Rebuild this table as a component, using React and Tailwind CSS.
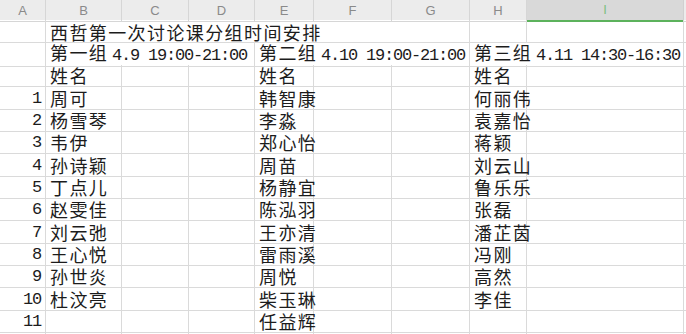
const CJK = 'font-["Noto_Sans_CJK_SC","Noto_Sans",sans-serif]'
const MONO = 'font-["Liberation_Mono","DejaVu_Sans_Mono",monospace]'

const GRID = 'grid grid-cols-[46px_76px_67px_66px_59px_78px_78px_57px_157px_1fr]'

const groupB = ['周可', '杨雪琴', '韦伊', '孙诗颖', '丁点儿', '赵雯佳', '刘云弛', '王心悦', '孙世炎', '杜汶亮', '']
const groupE = ['韩智康', '李淼', '郑心怡', '周苗', '杨静宜', '陈泓羽', '王亦清', '雷雨溪', '周悦', '柴玉琳', '任益辉']
const groupH = ['何丽伟', '袁嘉怡', '蒋颖', '刘云山', '鲁乐乐', '张磊', '潘芷茵', '冯刚', '高然', '李佳', '']

function Cell({ className = '', children }) {
  return (
    <div className={`h-full border-r border-b border-[#dadada] flex items-center px-1 whitespace-nowrap overflow-visible ${className}`}>
      {children}
    </div>
  )
}

function Text({ children, className = '' }) {
  return <span className={`${CJK} text-[18px] tracking-[1.4px] leading-[20px] text-[#1c1c1c] ${className}`}>{children}</span>
}

function Digits({ children }) {
  return (
    <span className={`${MONO} text-[17px] tracking-[-1.2px] leading-[20px] whitespace-pre text-[#1c1c1c]`}>{children}</span>
  )
}

// group heading: name + date/time, the time part is half-width
function Group({ name, rest }) {
  return (
    <span className="flex items-baseline">
      <Text className="w-[62px] shrink-0">{name}</Text>
      <Digits>{rest}</Digits>
    </span>
  )
}

function Header() {
  const cols = ['A', 'B', 'C', 'D', 'E', 'F', 'G', 'H']
  return (
    <div className={`${GRID} h-[20px] bg-[#ececec] text-[13px] text-[#8a8a8a] font-["Liberation_Sans",sans-serif]`}>
      {cols.map(c => (
        <div key={c} className="border-r border-b border-[#d6d6d6] flex items-center justify-center">
          {c}
        </div>
      ))}
      <div className="bg-[#d9d9d9] border-r border-[#d0d0d0] border-b-2 border-b-[#5cb25c] flex items-center justify-center text-[#7fbf7f]">
        I
      </div>
      <div className="border-b border-[#d6d6d6]" />
    </div>
  )
}

export default function App() {
  return (
    <div className="w-[686px] h-[334px] bg-white overflow-hidden">
      <Header />

      {/* title row, merged B:G */}
      <div className={`${GRID} h-[22.3px]`}>
        <Cell />
        <Cell className="col-span-6 pt-[2px]"><Text>西哲第一次讨论课分组时间安排</Text></Cell>
        <Cell />
        <Cell />
        <Cell />
      </div>

      {/* group headings, text runs over the empty cells */}
      <div className={`${GRID} h-[22.3px]`}>
        <Cell />
        <Cell className="col-span-3">
          <Group name="第一组" rest="4.9 19:00-21:00" />
        </Cell>
        <Cell className="col-span-3">
          <Group name="第二组" rest="4.10 19:00-21:00" />
        </Cell>
        <Cell className="col-span-2">
          <Group name="第三组" rest="4.11 14:30-16:30" />
        </Cell>
        <Cell />
      </div>

      <div className={`${GRID} h-[22.3px]`}>
        <Cell />
        <Cell><Text>姓名</Text></Cell>
        <Cell />
        <Cell />
        <Cell><Text>姓名</Text></Cell>
        <Cell />
        <Cell />
        <Cell><Text>姓名</Text></Cell>
        <Cell />
        <Cell />
      </div>

      {groupE.map((e, i) => (
        <div key={i} className={`${GRID} h-[22.3px]`}>
          <Cell className="justify-end pr-[4px] pt-[2px]">
            <Digits>{i + 1}</Digits>
          </Cell>
          <Cell><Text>{groupB[i]}</Text></Cell>
          <Cell />
          <Cell />
          <Cell><Text>{e}</Text></Cell>
          <Cell />
          <Cell />
          <Cell><Text>{groupH[i]}</Text></Cell>
          <Cell />
          <Cell />
        </div>
      ))}

      <div className={`${GRID} h-[22.3px]`}>
        {Array.from({ length: 10 }).map((_, i) => (
          <Cell key={i} />
        ))}
      </div>
    </div>
  )
}
